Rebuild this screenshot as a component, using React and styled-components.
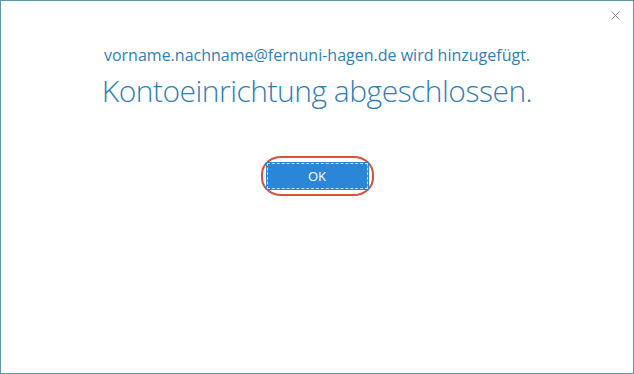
import React from 'react';
import styled, { createGlobalStyle } from 'styled-components';

const GlobalStyle = createGlobalStyle`
  html, body {
    margin: 0;
    padding: 0;
    background: #ffffff;
  }
  body {
    font-family: "Open Sans", "Noto Sans", "Liberation Sans", sans-serif;
  }
`;

const Window = styled.div`
  box-sizing: border-box;
  position: relative;
  width: 634px;
  height: 374px;
  border: 1px solid #5f97a3;
  background: #ffffff;
  display: flex;
  flex-direction: column;
  align-items: center;
  padding-top: 42px;
`;

const CloseButton = styled.button`
  position: absolute;
  top: 7px;
  right: 11px;
  width: 14px;
  height: 14px;
  padding: 0;
  border: none;
  background: transparent;
  display: flex;
  align-items: center;
  justify-content: center;
  cursor: pointer;
`;

const Account = styled.div`
  color: #2f7fb8;
  font-size: 16px;
  font-weight: 400;
  line-height: 24px;
`;

const Title = styled.h1`
  margin: 4px 0 0;
  color: #2f7fb8;
  font-size: 30px;
  font-weight: 300;
  line-height: 40px;
  letter-spacing: -0.5px;
`;

const ButtonRing = styled.div`
  margin-top: 45px;
  box-sizing: border-box;
  width: 113px;
  height: 40px;
  border: 2px solid #d9523b;
  border-radius: 20px / 18px;
  display: flex;
  align-items: center;
  justify-content: center;
`;

const OkButton = styled.button`
  box-sizing: border-box;
  width: 103px;
  height: 28px;
  background: #2b86d7;
  color: #ffffff;
  border: none;
  outline: 1px dashed rgba(255, 255, 255, 0.75);
  outline-offset: -2px;
  font-family: "Open Sans", "Noto Sans", sans-serif;
  font-size: 13px;
  padding: 0;
  cursor: pointer;
`;

export default function App() {
  return (
    <>
      <GlobalStyle />
      <Window>
        <CloseButton aria-label="Schließen">
          <svg width="9" height="9" viewBox="0 0 9 9">
            <path d="M0.5 0.5 L8.5 8.5 M8.5 0.5 L0.5 8.5" stroke="#8a8a8a" strokeWidth="1" fill="none" />
          </svg>
        </CloseButton>
        <Account>vorname.nachname@fernuni-hagen.de wird hinzugefügt.</Account>
        <Title>Kontoeinrichtung abgeschlossen.</Title>
        <ButtonRing>
          <OkButton>OK</OkButton>
        </ButtonRing>
      </Window>
    </>
  );
}
